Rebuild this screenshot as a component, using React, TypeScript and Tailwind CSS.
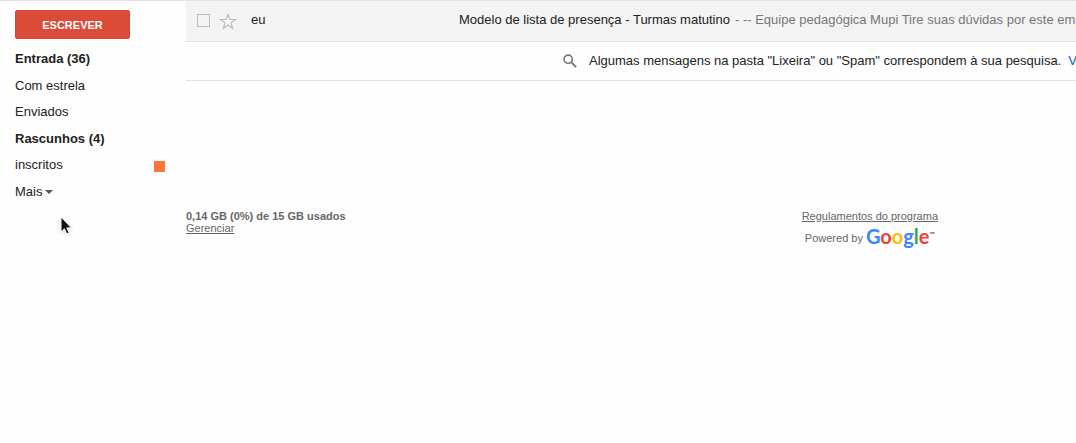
const folders = [
  { name: 'Entrada (36)', unread: true },
  { name: 'Com estrela' },
  { name: 'Enviados' },
  { name: 'Rascunhos (4)', unread: true },
  { name: 'inscritos', label: true },
];

function Sidebar() {
  return (
    <aside className="w-[186px] shrink-0 pt-[9px] pl-[15px]">
      <button
        type="button"
        className="block h-[29px] w-[115px] rounded-[2px] border border-[#d24836] bg-[#dc4a38] text-[11px] font-bold text-white"
      >
        ESCREVER
      </button>
      <nav aria-label="Marcadores" className="mt-[7px] grid h-[159px] grid-rows-6 pr-[21px]">
        {folders.map((folder) => (
          <a key={folder.name} href="#" className="flex items-center justify-between">
            <span className={folder.unread ? 'font-bold' : 'font-normal'}>{folder.name}</span>
            {folder.label && <span className="mt-[3px] h-[11px] w-[11px] bg-[#ff7537]" />}
          </a>
        ))}
        <button type="button" className="flex items-center gap-[3px] text-left">
          Mais
          <svg width="8" height="4" viewBox="0 0 8 4" aria-hidden="true">
            <path d="M0 0h8L4 4z" fill="#555" />
          </svg>
        </button>
      </nav>
    </aside>
  );
}

function MessageRow() {
  return (
    <div className="flex h-[41px] items-center border-b border-[#e2e2e2] bg-[#f3f3f3] pb-[2px] pl-[11px] whitespace-nowrap">
      <input
        type="checkbox"
        aria-label="Selecionar mensagem"
        className="h-[13px] w-[13px] shrink-0 appearance-none border border-[#bdbdbd] bg-[#f4f4f4]"
      />
      <button type="button" aria-label="Marcar com estrela" className="mt-[2px] ml-[9px] shrink-0">
        <svg width="18" height="17" viewBox="0 0 18 17" className="block" aria-hidden="true">
          <path
            d="M9 1.5l1.9 5h5.4l-4.3 3.4 1.6 5.4L9 12.1l-4.6 3.2L6 9.9 1.7 6.5h5.4z"
            fill="#f8f8f8"
            stroke="#bdbdbd"
            strokeWidth="1.2"
          />
        </svg>
      </button>
      <span className="ml-[14px] w-[208px] shrink-0">eu</span>
      <a href="#" className="flex shrink-0 gap-[5px]">
        <span>Modelo de lista de presença - Turmas matutino</span>
        <span className="text-[#777]">- -- Equipe pedagógica Mupi Tire suas dúvidas por este em</span>
      </a>
    </div>
  );
}

function SearchNotice() {
  return (
    <div className="flex h-[39px] items-center border-b border-[#e2e2e2] pl-[377px] whitespace-nowrap">
      <svg width="14" height="14" viewBox="0 0 14 14" className="shrink-0" aria-hidden="true">
        <circle cx="5.2" cy="5.2" r="4.1" fill="none" stroke="#777" strokeWidth="1.6" />
        <path d="M8.4 8.4l4.7 4.7" stroke="#777" strokeWidth="2" />
      </svg>
      <p className="ml-[12px] flex gap-[7px]">
        <span>Algumas mensagens na pasta "Lixeira" ou "Spam" correspondem à sua pesquisa.</span>
        <a href="#" className="text-[#15c]">
          V
        </a>
      </p>
    </div>
  );
}

function GoogleLogo() {
  return (
    <span className="flex items-start font-['Lato',sans-serif] text-[20px] leading-[20px] font-bold">
      <span>
        <span className="text-[#4285f4]">G</span>
        <span className="text-[#ea4335]">o</span>
        <span className="text-[#fbbc05]">o</span>
        <span className="text-[#4285f4]">g</span>
        <span className="text-[#34a853]">l</span>
        <span className="text-[#ea4335]">e</span>
      </span>
      <span className="text-[7px] leading-[16px] text-[#666]">™</span>
    </span>
  );
}

function Footer() {
  return (
    <footer className="mt-[129px] flex items-start justify-between pr-[138px] text-[11px] leading-[12px] text-[#666]">
      <div>
        <p className="font-bold">0,14 GB (0%) de 15 GB usados</p>
        <a href="#" className="block underline">
          Gerenciar
        </a>
      </div>
      <div className="flex flex-col items-center">
        <a href="#" className="underline">
          Regulamentos do programa
        </a>
        <div className="mt-[4px] flex items-start gap-[3px]">
          <span className="pt-[6px]">Powered by</span>
          <GoogleLogo />
        </div>
      </div>
    </footer>
  );
}

export default function App() {
  return (
    <div className="flex min-h-screen overflow-hidden border-t border-[#e2e2e2] bg-[#fefefe] font-['Liberation_Sans',Arial,sans-serif] text-[13px] leading-[16px] text-[#222]">
      <Sidebar />
      <main className="min-w-0 flex-1 overflow-hidden">
        <MessageRow />
        <SearchNotice />
        <Footer />
      </main>
      <svg
        width="14"
        height="20"
        viewBox="0 0 14 20"
        className="pointer-events-none absolute top-[216px] left-[60px] drop-shadow-sm"
        aria-hidden="true"
      >
        <path
          d="M1 1v15l3.4-3.2L6.8 18l2.4-1.1-2.4-5h4.7z"
          fill="#111"
          stroke="#fff"
          strokeWidth="1"
        />
      </svg>
    </div>
  );
}
